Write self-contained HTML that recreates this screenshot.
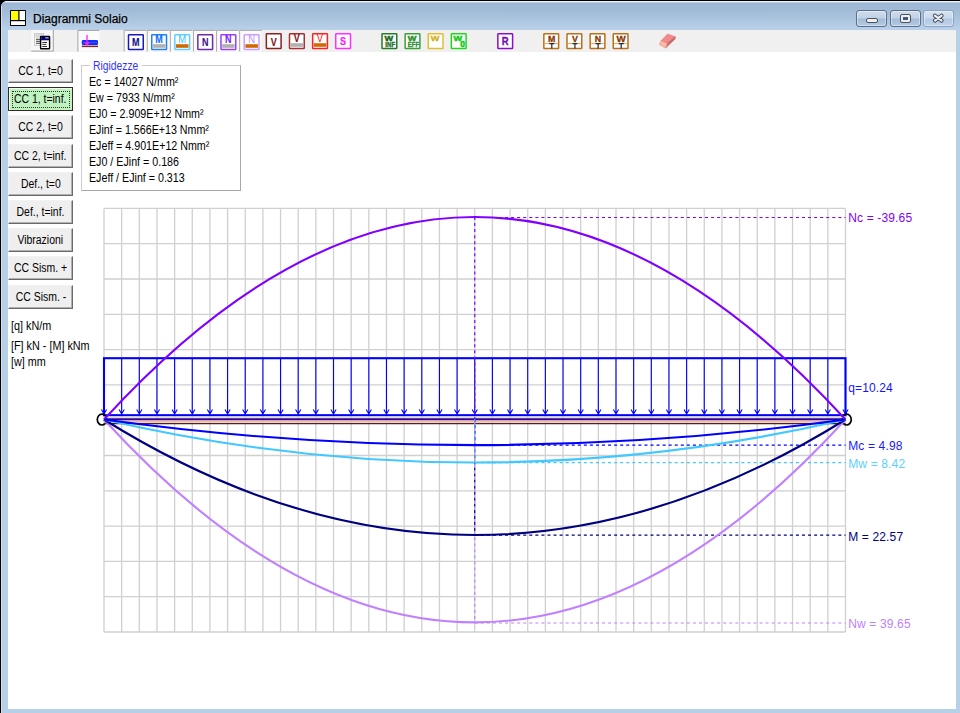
<!DOCTYPE html>
<html><head><meta charset="utf-8">
<style>
*{box-sizing:border-box}
html,body{margin:0;padding:0}
body{width:960px;height:713px;overflow:hidden;position:relative;background:#b6d0e8;font-family:"Liberation Sans",sans-serif;color:#000}
.a{position:absolute}
#blk{left:0;top:0;width:960px;height:713px;background:#000}
#frame{left:1px;top:1px;width:959px;height:712px;background:#b6d0e8;border-top-left-radius:6px}
#title{left:1px;top:1px;width:959px;height:29px;border-top-left-radius:6px;background:linear-gradient(#fafcfe 0px,#dde8f3 1px,#9cb6d4 2px,#a4bdd8 12px,#b9d1ea 29px)}
#client{left:8px;top:30px;width:948px;height:679px;background:#fff}
#tb{left:8px;top:30px;width:948px;height:22px;background:#f0f0f0}
.tt{left:33px;top:11.5px;font-size:12px;color:#000;white-space:nowrap;letter-spacing:0px;-webkit-text-stroke:0.25px #000;text-shadow:0 0 5px rgba(230,240,250,.6)}
.wb{top:10.3px;height:16.3px;border:1px solid #5d6f86;border-radius:3px;background:linear-gradient(#cfdcec 0,#c0d2e6 48%,#a3bbd8 52%,#b4cae2 100%);box-shadow:inset 0 0 0 1px rgba(255,255,255,.4)}
.ico{width:16px;height:16px;top:33.5px;background:#fff;border:2px solid #00f;font:bold 10px "Liberation Sans",sans-serif;text-align:center;line-height:13px}
.btn{left:8px;width:65px;height:24px;background:#efefef;border:1px solid;border-color:#f2f2f2 #6a6a6a #6a6a6a #f2f2f2;box-shadow:inset -1px -1px 0 #b0b0b0;font-size:12px;text-align:center;line-height:23px;white-space:nowrap}
.btn span{display:inline-block;transform:scaleX(0.87)}
.lbl{font-size:12px;white-space:nowrap;transform:scaleX(0.90);transform-origin:0 0}
.rg{left:88.5px;font-size:12px;white-space:nowrap;transform:scaleX(0.89);transform-origin:0 0}
.cl{font-size:12px;white-space:nowrap;left:848.2px;letter-spacing:0.15px}
</style></head><body>
<div class="a" id="blk"></div>
<div class="a" id="frame"></div>
<div class="a" id="title"></div>
<div class="a" style="left:1px;top:6px;width:1px;height:707px;background:#d3e2f2"></div>
<!-- title icon -->
<svg class="a" style="left:0;top:0" width="30" height="30" viewBox="0 0 30 30"><rect x="10" y="10" width="16" height="16" fill="#000" rx="0.8"/><rect x="11" y="11" width="7.3" height="9" fill="#ff0"/><rect x="19.5" y="11" width="5.6" height="9" fill="#fff"/><rect x="11" y="21.2" width="14" height="3.8" fill="#fff"/></svg>
<div class="a tt">Diagrammi Solaio</div>
<div class="a wb" style="left:856px;width:31px"></div>
<div class="a wb" style="left:889.5px;width:31px"></div>
<div class="a wb" style="left:923px;width:30.5px;border-color:#8ca3bf;background:linear-gradient(#d6e3f1 0,#c9daec 48%,#b3c9e2 52%,#bfd3ea 100%)"></div>
<div class="a" style="left:866.3px;top:18.2px;width:11.3px;height:4.9px;border:1.4px solid #46526a;border-radius:2px;background:#f2eee8"></div>
<div class="a" style="left:899.5px;top:14.2px;width:11.3px;height:8.8px;border:1.5px solid #46526a;border-radius:2px;background:#f2eee8"><div class="a" style="left:2.3px;top:2px;width:4.8px;height:2.5px;background:#3a5a8a"></div></div>
<svg class="a" style="left:930px;top:13px" width="16" height="12" viewBox="0 0 16 12"><path d="M4.9 2.6L11.6 7.6M11.6 2.6L4.9 7.6" stroke="#3c4a5c" stroke-width="3.9" stroke-linecap="round"/><path d="M4.9 2.6L11.6 7.6M11.6 2.6L4.9 7.6" stroke="#f0f0f0" stroke-width="2.1" stroke-linecap="round"/></svg>

<div class="a" id="client"></div>
<div class="a" id="tb"></div>
<svg class="a" style="left:0;top:0" width="960" height="60" viewBox="0 0 960 60" id="tbsvg">
<rect x="123.75" y="30" width="137.5" height="21.5" fill="#fafafa"/>
<path d="M124.15 51.5V30.4H146.45" stroke="#a0a0a0" stroke-width="0.9" fill="none"/>
<path d="M147.25 51.5V30.4H169.55" stroke="#a0a0a0" stroke-width="0.9" fill="none"/>
<path d="M170.35 51.5V30.4H192.65" stroke="#a0a0a0" stroke-width="0.9" fill="none"/>
<path d="M193.45 51.5V30.4H215.75" stroke="#a0a0a0" stroke-width="0.9" fill="none"/>
<path d="M216.55 51.5V30.4H238.85" stroke="#a0a0a0" stroke-width="0.9" fill="none"/>
<path d="M239.65 51.5V30.4H261.95" stroke="#a0a0a0" stroke-width="0.9" fill="none"/>
<rect x="31.2" y="30" width="22.5" height="21.5" fill="#f8f8f8"/>
<path d="M31.2 51.1H53.3V30" stroke="#a0a0a0" stroke-width="1" fill="none"/>
<rect x="77.5" y="30" width="22" height="21.5" fill="#fbfbfb"/>
<path d="M77.9 51.5V30.4H99.3" stroke="#a0a0a0" stroke-width="1" fill="none"/>
<rect x="34.4" y="33.4" width="9.2" height="12" fill="#f6f6f6" stroke="#c4c4c4" stroke-width="0.8"/>
<path d="M35.4 35H42.6M35.4 36.9H42.6" stroke="#b8b8b8" stroke-width="0.9"/>
<path d="M36 39.3H40.8M36 41.3H40.8M36 43.3H40.8" stroke="#404040" stroke-width="1"/>
<rect x="40.6" y="36.4" width="9" height="12.3" fill="#fff" stroke="#000" stroke-width="1.4" rx="0.5"/>
<rect x="41.2" y="37" width="7.8" height="3.3" fill="#000080"/>
<rect x="45.2" y="37.3" width="3.4" height="1.1" fill="#d0d0c0"/>
<path d="M42.3 42.5H47M42.3 44.4H46.3M42.3 46.5H47" stroke="#202020" stroke-width="0.9"/>
<rect x="81.8" y="39.9" width="16.2" height="5.2" rx="1.3" fill="#1030ff"/>
<path d="M83 42.5H97" stroke="#8080ff" stroke-width="0.8" stroke-dasharray="0.8 0.8"/>
<rect x="81.8" y="45.6" width="16.2" height="1.5" fill="#902020"/>
<path d="M87 35V45M84.8 42.2L87 45L89.2 42.2" stroke="#ff20ff" stroke-width="1.3" fill="none"/>
<rect x="128.50" y="34.75" width="14.75" height="14.80" fill="#fff" stroke="#1a1ab8" stroke-width="1.5" rx="0.6"/>
<text transform="translate(135.85 46.3) scale(0.86 1)" font-family="Liberation Sans" font-size="10.5" font-weight="bold" fill="#10108a" stroke="#10108a" stroke-width="0.12" text-anchor="middle">M</text>
<rect x="151.75" y="34.75" width="14.75" height="14.80" fill="#fff" stroke="#2080ff" stroke-width="1.5" rx="0.6"/>
<rect x="152.90" y="44.2" width="12.5" height="3.6" fill="#b0b0b0"/>
<text transform="translate(159.10 43.0) scale(0.86 1)" font-family="Liberation Sans" font-size="10.5" font-weight="bold" fill="#1070ff" stroke="#1070ff" stroke-width="0.12" text-anchor="middle">M</text>
<rect x="174.85" y="34.75" width="14.75" height="14.80" fill="#fff" stroke="#60d0ff" stroke-width="1.5" rx="0.6"/>
<rect x="176.00" y="44.2" width="12.5" height="3.6" fill="#d06a00"/>
<text transform="translate(182.20 43.0) scale(0.86 1)" font-family="Liberation Sans" font-size="11" font-weight="normal" fill="#40c0ff" text-anchor="middle">M</text>
<rect x="197.85" y="34.75" width="14.75" height="14.80" fill="#fff" stroke="#6a2aaa" stroke-width="1.5" rx="0.6"/>
<text transform="translate(205.20 46.3) scale(0.86 1)" font-family="Liberation Sans" font-size="10.5" font-weight="bold" fill="#40108a" stroke="#40108a" stroke-width="0.12" text-anchor="middle">N</text>
<rect x="221.00" y="34.75" width="14.75" height="14.80" fill="#fff" stroke="#9a40ff" stroke-width="1.5" rx="0.6"/>
<rect x="222.15" y="44.2" width="12.5" height="3.6" fill="#b0b0b0"/>
<text transform="translate(228.35 43.0) scale(0.86 1)" font-family="Liberation Sans" font-size="10.5" font-weight="bold" fill="#8020ff" stroke="#8020ff" stroke-width="0.12" text-anchor="middle">N</text>
<rect x="244.25" y="34.75" width="14.75" height="14.80" fill="#fff" stroke="#c8a0ff" stroke-width="1.5" rx="0.6"/>
<rect x="245.40" y="44.2" width="12.5" height="3.6" fill="#d06a00"/>
<text transform="translate(251.60 43.0) scale(0.86 1)" font-family="Liberation Sans" font-size="11" font-weight="normal" fill="#c090ff" text-anchor="middle">N</text>
<rect x="266.35" y="33.75" width="14.75" height="14.80" fill="#fff" stroke="#8a2020" stroke-width="1.5" rx="0.6"/>
<text transform="translate(273.70 45.5) scale(0.86 1)" font-family="Liberation Sans" font-size="10.5" font-weight="bold" fill="#7a1010" stroke="#7a1010" stroke-width="0.12" text-anchor="middle">V</text>
<rect x="289.50" y="33.75" width="14.75" height="14.80" fill="#fff" stroke="#a83030" stroke-width="1.5" rx="0.6"/>
<rect x="290.65" y="43.2" width="12.5" height="3.6" fill="#b0b0b0"/>
<text transform="translate(296.85 41.8) scale(0.86 1)" font-family="Liberation Sans" font-size="10.5" font-weight="bold" fill="#8a1010" stroke="#8a1010" stroke-width="0.12" text-anchor="middle">V</text>
<rect x="312.65" y="33.75" width="14.75" height="14.80" fill="#fff" stroke="#ff2020" stroke-width="1.5" rx="0.6"/>
<rect x="313.80" y="43.2" width="12.5" height="3.6" fill="#d06a00"/>
<text transform="translate(320.00 41.8) scale(0.86 1)" font-family="Liberation Sans" font-size="11" font-weight="normal" fill="#ff1010" text-anchor="middle">V</text>
<rect x="335.75" y="33.75" width="14.75" height="14.80" fill="#fff" stroke="#ff30ff" stroke-width="1.5" rx="0.6"/>
<text transform="translate(343.10 45.3) scale(0.86 1)" font-family="Liberation Sans" font-size="10.5" font-weight="bold" fill="#ff10ff" stroke="#ff10ff" stroke-width="0.12" text-anchor="middle">S</text>
<rect x="382.00" y="33.75" width="14.75" height="14.80" fill="#fff" stroke="#2a7a2a" stroke-width="1.5" rx="0.6"/>
<rect x="405.15" y="33.75" width="14.75" height="14.80" fill="#fff" stroke="#3aa03a" stroke-width="1.5" rx="0.6"/>
<rect x="428.25" y="33.75" width="14.75" height="14.80" fill="#fff" stroke="#e0c030" stroke-width="1.5" rx="0.6"/>
<rect x="451.35" y="33.75" width="14.75" height="14.80" fill="#fff" stroke="#20d820" stroke-width="1.5" rx="0.6"/>
<text transform="translate(388.85 40.9) scale(1.15 1)" font-family="Liberation Sans" font-size="8" font-weight="bold" fill="#1a6a1a" stroke="#1a6a1a" stroke-width="0.45" text-anchor="middle">W</text>
<text transform="translate(390.25 46.9) scale(0.92 1)" font-family="Liberation Sans" font-size="6.6" font-weight="bold" fill="#1a6a1a" stroke="#1a6a1a" stroke-width="0.3" text-anchor="middle">INF</text>
<text transform="translate(412.00 40.9) scale(1.15 1)" font-family="Liberation Sans" font-size="8" font-weight="bold" fill="#2a902a" stroke="#2a902a" stroke-width="0.45" text-anchor="middle">W</text>
<text transform="translate(413.40 46.9) scale(0.92 1)" font-family="Liberation Sans" font-size="6.6" font-weight="bold" fill="#2a902a" stroke="#2a902a" stroke-width="0.3" text-anchor="middle">EFF</text>
<text transform="translate(435.10 40.9) scale(1.15 1)" font-family="Liberation Sans" font-size="8" font-weight="bold" fill="#d0b020" stroke="#d0b020" stroke-width="0.3" text-anchor="middle">W</text>
<text transform="translate(457.90 40.9) scale(1.15 1)" font-family="Liberation Sans" font-size="8" font-weight="bold" fill="#10c810" stroke="#10c810" stroke-width="0.45" text-anchor="middle">W</text>
<text x="462.50" y="47.1" font-family="Liberation Sans" font-size="8.4" font-weight="bold" fill="#10c810" stroke="#10c810" stroke-width="0.5" text-anchor="middle">0</text>
<rect x="497.85" y="33.75" width="14.75" height="14.80" fill="#fff" stroke="#8a10c8" stroke-width="1.5" rx="0.6"/>
<text transform="translate(505.20 45.2) scale(0.95 1)" font-family="Liberation Sans" font-size="10" font-weight="bold" fill="#7010b0" stroke="#7010b0" stroke-width="0.3" text-anchor="middle">R</text>
<rect x="543.85" y="33.75" width="14.75" height="14.80" fill="#fff" stroke="#b8701a" stroke-width="1.5" rx="0.6"/>
<path d="M544.60 43.6H557.85" stroke="#ffa040" stroke-width="1"/>
<path d="M549.30 43.6H554.30M551.80 43.6V48.4" stroke="#202830" stroke-width="1.2"/>
<text transform="translate(551.70 41.9) scale(0.95 1)" font-family="Liberation Sans" font-size="9.3" font-weight="bold" fill="#8a3a08" stroke="#8a3a08" stroke-width="0.3" text-anchor="middle">M</text>
<rect x="567.00" y="33.75" width="14.75" height="14.80" fill="#fff" stroke="#b8701a" stroke-width="1.5" rx="0.6"/>
<path d="M567.75 43.6H581.00" stroke="#ffa040" stroke-width="1"/>
<path d="M572.45 43.6H577.45M574.95 43.6V48.4" stroke="#202830" stroke-width="1.2"/>
<text transform="translate(574.85 41.9) scale(0.95 1)" font-family="Liberation Sans" font-size="9.3" font-weight="bold" fill="#8a3a08" stroke="#8a3a08" stroke-width="0.3" text-anchor="middle">V</text>
<rect x="590.15" y="33.75" width="14.75" height="14.80" fill="#fff" stroke="#b8701a" stroke-width="1.5" rx="0.6"/>
<path d="M590.90 43.6H604.15" stroke="#ffa040" stroke-width="1"/>
<path d="M595.60 43.6H600.60M598.10 43.6V48.4" stroke="#202830" stroke-width="1.2"/>
<text transform="translate(598.00 41.9) scale(0.95 1)" font-family="Liberation Sans" font-size="9.3" font-weight="bold" fill="#8a3a08" stroke="#8a3a08" stroke-width="0.3" text-anchor="middle">N</text>
<rect x="613.25" y="33.75" width="14.75" height="14.80" fill="#fff" stroke="#b8701a" stroke-width="1.5" rx="0.6"/>
<path d="M614.00 43.6H627.25" stroke="#ffa040" stroke-width="1"/>
<path d="M618.70 43.6H623.70M621.20 43.6V48.4" stroke="#202830" stroke-width="1.2"/>
<text transform="translate(621.10 41.9) scale(1.05 1)" font-family="Liberation Sans" font-size="9.3" font-weight="bold" fill="#8a3a08" stroke="#8a3a08" stroke-width="0.3" text-anchor="middle">W</text>
<path d="M667.6 34L675.3 36.8L667.3 43.2L661 40.8Z" fill="#f58a8a" stroke="#d87070" stroke-width="0.5"/>
<path d="M675.3 36.8L675.2 38.9L665.6 48L667.3 43.2Z" fill="#cc6a6a" stroke="#c06060" stroke-width="0.5"/>
<path d="M661 40.8L667.3 43.2L665.6 48L659.2 44.5Z" fill="#ffb6a2" stroke="#e08a80" stroke-width="0.5"/>
</svg>


<!-- left buttons -->
<div class="a btn" style="top:59px"><span>CC 1, t=0</span></div>
<div class="a" style="left:8px;top:86.7px;width:65px;height:24.3px;background:#3a2828"></div>
<div class="a" style="left:9.2px;top:87.9px;width:62.6px;height:21.7px;background:#f4fff4"></div>
<div class="a" style="left:10.2px;top:88.9px;width:61.6px;height:20.7px;background:#c0f2c0"></div>
<div class="a" style="left:12.3px;top:91px;width:57.5px;height:17px;border:1px dotted #2a3a2a"></div>
<div class="a btn" style="top:87.2px;background:transparent;border-color:transparent;box-shadow:none"><span>CC 1, t=inf.</span></div>
<div class="a btn" style="top:115.4px"><span>CC 2, t=0</span></div>
<div class="a btn" style="top:143.6px"><span>CC 2, t=inf.</span></div>
<div class="a btn" style="top:171.8px"><span>Def., t=0</span></div>
<div class="a btn" style="top:200px"><span>Def., t=inf.</span></div>
<div class="a btn" style="top:228.2px"><span>Vibrazioni</span></div>
<div class="a btn" style="top:256.4px"><span>CC Sism. +</span></div>
<div class="a btn" style="top:284.6px"><span>CC Sism. -</span></div>
<div class="a lbl" style="left:11px;top:319.1px">[q] kN/m</div>
<div class="a lbl" style="left:11px;top:338.9px">[F] kN - [M] kNm</div>
<div class="a lbl" style="left:11px;top:354.7px">[w] mm</div>
<!-- group box -->
<div class="a" style="left:81px;top:64.6px;width:160.3px;height:126.2px;border:1px solid;border-color:#cdcdcd #a8a8a8 #a8a8a8 #cdcdcd"></div>
<div class="a" style="left:90px;top:58px;width:52px;height:12px;background:#fff"></div>
<div class="a lbl" style="left:93px;top:59.1px;color:#3434ff;transform:scaleX(0.86)">Rigidezze</div>
<div class="a rg" style="top:75.00px">Ec = 14027 N/mm²</div>
<div class="a rg" style="top:91.06px">Ew = 7933 N/mm²</div>
<div class="a rg" style="top:107.12px">EJ0 = 2.909E+12 Nmm²</div>
<div class="a rg" style="top:123.18px">EJinf = 1.566E+13 Nmm²</div>
<div class="a rg" style="top:139.24px">EJeff = 4.901E+12 Nmm²</div>
<div class="a rg" style="top:155.30px">EJ0 / EJinf = 0.186</div>
<div class="a rg" style="top:171.36px">EJeff / EJinf = 0.313</div>
<!-- chart labels -->
<div class="a cl" style="top:211.1px;color:#8000ff">Nc = -39.65</div>
<div class="a cl" style="top:380.9px;color:#1414ff">q=10.24</div>
<div class="a cl" style="top:439.2px;color:#1a1aff">Mc = 4.98</div>
<div class="a cl" style="top:457.3px;color:#5cd0ff">Mw = 8.42</div>
<div class="a cl" style="top:530.1px;color:#000080">M = 22.57</div>
<div class="a cl" style="top:617.3px;color:#c080ff">Nw = 39.65</div>
<!-- chart placeholder -->
<svg class="a" style="left:0;top:0" width="960" height="713" viewBox="0 0 960 713" id="chart">
<path d="M104.00 208.4V632.0M121.65 208.4V632.0M139.31 208.4V632.0M156.96 208.4V632.0M174.62 208.4V632.0M192.27 208.4V632.0M209.93 208.4V632.0M227.58 208.4V632.0M245.24 208.4V632.0M262.89 208.4V632.0M280.55 208.4V632.0M298.20 208.4V632.0M315.86 208.4V632.0M333.51 208.4V632.0M351.17 208.4V632.0M368.82 208.4V632.0M386.48 208.4V632.0M404.13 208.4V632.0M421.79 208.4V632.0M439.44 208.4V632.0M457.10 208.4V632.0M474.75 208.4V632.0M492.40 208.4V632.0M510.06 208.4V632.0M527.71 208.4V632.0M545.37 208.4V632.0M563.02 208.4V632.0M580.68 208.4V632.0M598.33 208.4V632.0M615.99 208.4V632.0M633.64 208.4V632.0M651.30 208.4V632.0M668.95 208.4V632.0M686.61 208.4V632.0M704.26 208.4V632.0M721.92 208.4V632.0M739.57 208.4V632.0M757.23 208.4V632.0M774.88 208.4V632.0M792.54 208.4V632.0M810.19 208.4V632.0M827.85 208.4V632.0M845.50 208.4V632.0M104.0 208.40H845.5M104.0 243.70H845.5M104.0 279.00H845.5M104.0 314.30H845.5M104.0 349.60H845.5M104.0 384.90H845.5M104.0 420.20H845.5M104.0 455.50H845.5M104.0 490.80H845.5M104.0 526.10H845.5M104.0 561.40H845.5M104.0 596.70H845.5M104.0 632.00H845.5" stroke="#d0d0d0" stroke-width="1.3" fill="none"/>
<rect x="104.0" y="358.2" width="741.5" height="57" fill="none" stroke="#0000ff" stroke-width="2.1"/>
<path d="M104.00 358V414M101.40 409.5L104.00 414L106.60 409.5M121.65 358V414M119.05 409.5L121.65 414L124.25 409.5M139.31 358V414M136.71 409.5L139.31 414L141.91 409.5M156.96 358V414M154.36 409.5L156.96 414L159.56 409.5M174.62 358V414M172.02 409.5L174.62 414L177.22 409.5M192.27 358V414M189.67 409.5L192.27 414L194.87 409.5M209.93 358V414M207.33 409.5L209.93 414L212.53 409.5M227.58 358V414M224.98 409.5L227.58 414L230.18 409.5M245.24 358V414M242.64 409.5L245.24 414L247.84 409.5M262.89 358V414M260.29 409.5L262.89 414L265.49 409.5M280.55 358V414M277.95 409.5L280.55 414L283.15 409.5M298.20 358V414M295.60 409.5L298.20 414L300.80 409.5M315.86 358V414M313.26 409.5L315.86 414L318.46 409.5M333.51 358V414M330.91 409.5L333.51 414L336.11 409.5M351.17 358V414M348.57 409.5L351.17 414L353.77 409.5M368.82 358V414M366.22 409.5L368.82 414L371.42 409.5M386.48 358V414M383.88 409.5L386.48 414L389.08 409.5M404.13 358V414M401.53 409.5L404.13 414L406.73 409.5M421.79 358V414M419.19 409.5L421.79 414L424.39 409.5M439.44 358V414M436.84 409.5L439.44 414L442.04 409.5M457.10 358V414M454.50 409.5L457.10 414L459.70 409.5M474.75 358V414M472.15 409.5L474.75 414L477.35 409.5M492.40 358V414M489.80 409.5L492.40 414L495.00 409.5M510.06 358V414M507.46 409.5L510.06 414L512.66 409.5M527.71 358V414M525.11 409.5L527.71 414L530.31 409.5M545.37 358V414M542.77 409.5L545.37 414L547.97 409.5M563.02 358V414M560.42 409.5L563.02 414L565.62 409.5M580.68 358V414M578.08 409.5L580.68 414L583.28 409.5M598.33 358V414M595.73 409.5L598.33 414L600.93 409.5M615.99 358V414M613.39 409.5L615.99 414L618.59 409.5M633.64 358V414M631.04 409.5L633.64 414L636.24 409.5M651.30 358V414M648.70 409.5L651.30 414L653.90 409.5M668.95 358V414M666.35 409.5L668.95 414L671.55 409.5M686.61 358V414M684.01 409.5L686.61 414L689.21 409.5M704.26 358V414M701.66 409.5L704.26 414L706.86 409.5M721.92 358V414M719.32 409.5L721.92 414L724.52 409.5M739.57 358V414M736.97 409.5L739.57 414L742.17 409.5M757.23 358V414M754.63 409.5L757.23 414L759.83 409.5M774.88 358V414M772.28 409.5L774.88 414L777.48 409.5M792.54 358V414M789.94 409.5L792.54 414L795.14 409.5M810.19 358V414M807.59 409.5L810.19 414L812.79 409.5M827.85 358V414M825.25 409.5L827.85 414L830.45 409.5M845.50 358V414M842.90 409.5L845.50 414L848.10 409.5" stroke="#0000ff" stroke-width="1.1" fill="none"/>
<ellipse cx="101.9" cy="419.6" rx="4.6" ry="5.4" fill="none" stroke="#000" stroke-width="1.7"/>
<ellipse cx="846.65" cy="419.6" rx="4.6" ry="5.4" fill="none" stroke="#000" stroke-width="1.7"/>
<path d="M104.0 417.4H845.5" stroke="#e0e0b0" stroke-width="1.1"/>
<path d="M104.0 419.2H845.5" stroke="#3000a0" stroke-width="1.9"/>
<path d="M104.0 421.8H845.5" stroke="#ffb8a0" stroke-width="2"/>
<path d="M104.0 423.6H845.5" stroke="#402828" stroke-width="1.1"/>
<path d="M474.75 217V419" stroke="#8000ff" stroke-width="1.2" stroke-dasharray="3 3.06" stroke-dashoffset="0"/>
<path d="M474.75 419V445" stroke="#0000ff" stroke-width="1.2" stroke-dasharray="3 3.06" stroke-dashoffset="0"/>
<path d="M474.75 419V535" stroke="#000080" stroke-width="1.2" stroke-dasharray="3 3.06" stroke-dashoffset="0"/>
<path d="M474.75 419V462.5" stroke="#40c8ff" stroke-width="1.2" stroke-dasharray="3 3.06" stroke-dashoffset="0"/>
<path d="M474.75 419V622.4" stroke="#c080ff" stroke-width="1.2" stroke-dasharray="3 3.06" stroke-dashoffset="3.03"/>
<path d="M474.75 217.5H845.5" stroke="#8000ff" stroke-width="1.2" stroke-dasharray="3 3.06"/>
<path d="M474.75 445.2H845.5" stroke="#0000ff" stroke-width="1.2" stroke-dasharray="3 3.06"/>
<path d="M474.75 462.6H845.5" stroke="#40c8ff" stroke-width="1.2" stroke-dasharray="3 3.06"/>
<path d="M474.75 535.2H845.5" stroke="#000080" stroke-width="1.2" stroke-dasharray="3 3.06"/>
<path d="M474.75 623H845.5" stroke="#c080ff" stroke-width="1.2" stroke-dasharray="3 3.06"/>
<path d="M104.00 419.5 Q474.75 14.50 845.50 419.5" fill="none" stroke="#8000ff" stroke-width="2.1"/>
<path d="M104.00 419.5 Q474.75 825.30 845.50 419.5" fill="none" stroke="#c080ff" stroke-width="2.1"/>
<path d="M104.00 419.5 Q474.75 650.50 845.50 419.5" fill="none" stroke="#000080" stroke-width="2.1"/>
<path d="M104.00 419.5 Q474.75 505.50 845.50 419.5" fill="none" stroke="#40c8ff" stroke-width="2.1"/>
<path d="M104.00 419.5 Q474.75 470.70 845.50 419.5" fill="none" stroke="#0000ff" stroke-width="2.1"/>
</svg>

</body></html>
